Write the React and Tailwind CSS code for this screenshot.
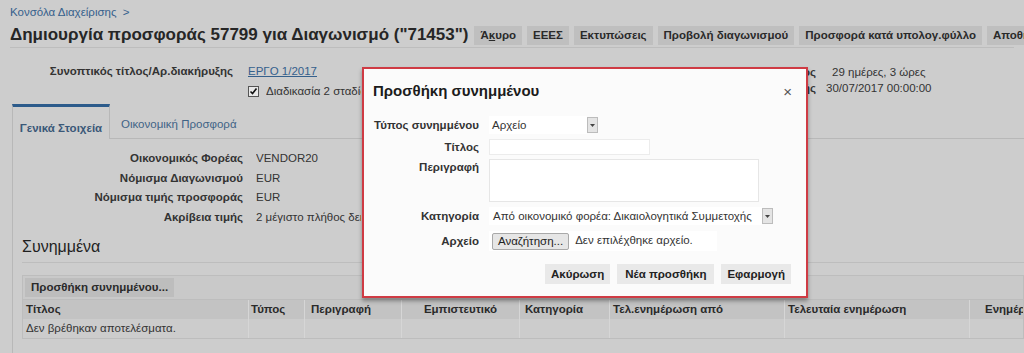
import React from 'react';

const font = "font-['Liberation_Sans',Arial,'DejaVu_Sans',sans-serif]";

const topButtons = ['ΕΕΕΣ', 'Εκτυπώσεις', 'Προβολή διαγωνισμού', 'Προσφορά κατά υπολογ.φύλλο', 'Αποθήκευση'];

const details = [
  ['Οικονομικός Φορέας', 'VENDOR20'],
  ['Νόμισμα Διαγωνισμού', 'EUR'],
  ['Νόμισμα τιμής προσφοράς', 'EUR'],
  ['Ακρίβεια τιμής', '2 μέγιστο πλήθος δεκαδικών ψηφίων'],
];

const columns = [
  { label: 'Τίτλος', w: 'w-[225px] shrink-0', cls: 'pl-[3px]' },
  { label: 'Τύπος', w: 'w-[56px] shrink-0', cls: 'pl-[2px]' },
  { label: 'Περιγραφή', w: 'w-[97px] shrink-0', cls: 'pl-[6px]' },
  { label: 'Εμπιστευτικό', w: 'w-[118px] shrink-0', cls: 'text-center' },
  { label: 'Κατηγορία', w: 'w-[90px] shrink-0', cls: 'pl-[5px]' },
  { label: 'Τελ.ενημέρωση από', w: 'w-[175px] shrink-0', cls: 'pl-[3px]' },
  { label: 'Τελευταία ενημέρωση', w: 'w-[185px] shrink-0', cls: 'pl-[3px]' },
  { label: 'Ενημέρωση', w: 'flex-1 min-w-0 overflow-hidden', cls: 'pl-[15px]' },
];

// tiny grey dropdown button used by the selects
const DropBtn = () => (
  <span className="w-[11px] h-[16px] border border-[#bcbcbc] bg-[#e4e4e4] flex items-center justify-center">
    <svg width="5" height="3" viewBox="0 0 5 3"><path d="M0 0h5L2.5 3z" fill="#444" /></svg>
  </span>
);

const Modal = () => (
  <div className="absolute left-[362px] top-[67px] w-[446px] h-[231px] border-2 border-[#cf3b44] bg-[#fbfbfb] shadow-[0_3px_4px_rgba(0,0,0,0.35)] flex flex-col">
    <div className="flex items-center justify-between pl-[9px] pr-[14px] pt-[11px] h-[34px]">
      <span className="text-[15px] text-[#1c1c1c] font-bold">Προσθήκη συνημμένου</span>
      <span className="text-[15px] text-[#555] leading-none">×</span>
    </div>
    <div className="mt-[13px] grid grid-cols-[115px_1fr] gap-x-[10px] text-[11.5px] text-[#333]">
      <span className="font-bold text-right leading-[18px]">Τύπος συνημμένου</span>
      <div className="flex items-center h-[18px]">
        <span className="w-[98px] h-[18px] bg-white pl-[3px] leading-[18px]">Αρχείο</span>
        <DropBtn />
      </div>

      <span className="font-bold text-right leading-[16px] mt-[5px]">Τίτλος</span>
      <span className="w-[161px] h-[16px] bg-white border border-[#ececec] mt-[5px]" />

      <span className="font-bold text-right leading-[16px] mt-[4px]">Περιγραφή</span>
      <span className="w-[270px] h-[43px] bg-white border border-[#e6e6e6] mt-[4px]" />

      <span className="font-bold text-right leading-[18px] mt-[5px]">Κατηγορία</span>
      <div className="flex items-center h-[18px] mt-[5px]">
        <span className="w-[273px] h-[18px] bg-white pl-[4px] leading-[18px]">Από οικονομικό φορέα: Δικαιολογητικά Συμμετοχής</span>
        <DropBtn />
      </div>

      <span className="font-bold text-right leading-[20px] mt-[6px]">Αρχείο</span>
      <div className="w-[228px] h-[20px] bg-white flex items-center gap-[6px] mt-[6px] pl-[3px]">
        <span className="h-[17px] px-[5px] border border-[#a9a9a9] bg-[#e6e6e6] rounded-[2px] leading-[15px] text-[#222]">Αναζήτηση...</span>
        <span>Δεν επιλέχθηκε αρχείο.</span>
      </div>
    </div>
    <div className="flex justify-end gap-[7px] pr-[15px] mt-[13px] text-[11.5px] font-bold text-[#222]">
      <span className="h-[20px] px-[6px] bg-[#e9e9e9] leading-[20px]">Ακύρωση</span>
      <span className="h-[20px] px-[8px] bg-[#e9e9e9] leading-[20px]">Νέα προσθήκη</span>
      <span className="h-[20px] px-[6px] bg-[#e9e9e9] leading-[20px]">Εφαρμογή</span>
    </div>
  </div>
);

export default function App() {
  return (
    <div className={`relative w-[1024px] h-[353px] overflow-hidden bg-[#cdcdcd] text-[12px] text-[#333] ${font}`}>
      {/* header */}
      <div className="px-[10px] pt-[4px]">
        <div className="text-[11.5px] leading-[16px] text-[#35608c]">Κονσόλα Διαχείρισης &nbsp;&gt;</div>
        <div className="flex items-center mt-[3px] h-[25px] border-b border-[#bdbdbd]">
          <h1 className="text-[17px] font-bold text-[#262626] whitespace-nowrap">Δημιουργία προσφοράς 57799 για Διαγωνισμό ("71453")</h1>
          <div className="flex gap-[5px] ml-[6px] text-[11.5px] font-bold text-[#2a2a2a] whitespace-nowrap">
            <span className="h-[19px] leading-[19px] px-[6px] bg-[#bfbfbf]">Ά<span className="underline">κ</span>υρο</span>
            {topButtons.map(b => (
              <span key={b} className="h-[19px] leading-[19px] px-[6px] bg-[#bfbfbf]">{b}</span>
            ))}
          </div>
        </div>
      </div>

      {/* summary */}
      <div className="relative h-[56px] text-[11.5px]">
        <div className="grid grid-cols-[233px_1fr] gap-x-[15px] pt-[15px]">
          <span className="font-bold text-right leading-[17px]">Συνοπτικός τίτλος/Αρ.διακήρυξης</span>
          <span className="text-[#35608c] underline leading-[17px]">ΕΡΓΟ 1/2017</span>
          <span />
          <div className="flex items-center gap-[7px] mt-[3px]">
            <span className="w-[11px] h-[11px] border border-[#555] bg-[#e8e8e8] flex items-center justify-center">
              <svg width="9" height="9" viewBox="0 0 9 9"><path d="M1.5 4.5l2 2 4-5" stroke="#111" strokeWidth="1.6" fill="none" /></svg>
            </span>
            <span className="w-[95px] overflow-hidden whitespace-nowrap">Διαδικασία 2 σταδίων</span>
          </div>
        </div>
        <div className="absolute left-[600px] top-[16px] grid grid-cols-[216px_1fr] gap-x-[10px] leading-[16px]">
          <span className="font-bold text-right">Υπολειπόμενος χρόνος</span>
          <span className="pl-[6px]">29 ημέρες, 3 ώρες</span>
          <span className="font-bold text-right">Προθεσμία υποβολής</span>
          <span>30/07/2017 00:00:00</span>
        </div>
      </div>

      {/* tabs */}
      <div className="flex h-[35px] ml-[12px]">
        <div className="w-[98px] border-t-[3px] border-t-[#2c5b8b] border-x border-x-[#b8b8b8] flex items-center justify-center pt-[12px] text-[11.5px] font-bold text-[#3a5878]">
          Γενικά Στοιχεία
        </div>
        <div className="flex-1 border-b border-[#b8b8b8] flex items-center pl-[11px] pt-[8px] text-[11.5px] text-[#3f6386]">
          Οικονομική Προσφορά
        </div>
      </div>

      {/* tab content */}
      <div className="ml-[12px] border-l border-[#b8b8b8] h-[300px] pt-[10px]">
        <div className="grid grid-cols-[230px_1fr] gap-x-[13px] text-[11.5px]">
          {details.map(([k, v]) => (
            <React.Fragment key={k}>
              <span className="font-bold text-right leading-[19.5px]">{k}</span>
              <span className="leading-[19.5px] whitespace-nowrap w-[105px] overflow-hidden">{v}</span>
            </React.Fragment>
          ))}
        </div>

        <div className="ml-[9px] mt-[8px] border-b border-[#bdbdbd] pb-[3px] text-[16px] text-[#1f1f1f]">Συνημμένα</div>

        <div className="ml-[9px] mt-[12px] border border-[#bdbdbd] text-[11.5px]">
          <div className="bg-[#c9c9c9] h-[24px] flex items-center pl-[2px] border-b border-[#bdbdbd]">
            <span className="h-[19px] leading-[19px] px-[6px] bg-[#bdbdbd] font-bold text-[#2a2a2a]">Προσθήκη συνημμένου...</span>
          </div>
          <div className="flex h-[19px] bg-[#c3c3c3] font-bold text-[#2a2a2a]">
            {columns.map((c, i) => (
              <span key={c.label} className={`${c.w} ${c.cls} leading-[19px] whitespace-nowrap ${i ? 'border-l border-[#d6d6d6]' : ''}`}>{c.label}</span>
            ))}
          </div>
          <div className="flex h-[19px] bg-[#cccccc]">
            {columns.map((c, i) => (
              <span key={c.label} className={`${c.w} leading-[19px] pl-[3px] whitespace-nowrap ${i ? 'border-l border-[#d6d6d6]' : ''}`}>
                {i === 0 ? 'Δεν βρέθηκαν αποτελέσματα.' : ''}
              </span>
            ))}
          </div>
        </div>
      </div>

      <Modal />
    </div>
  );
}
